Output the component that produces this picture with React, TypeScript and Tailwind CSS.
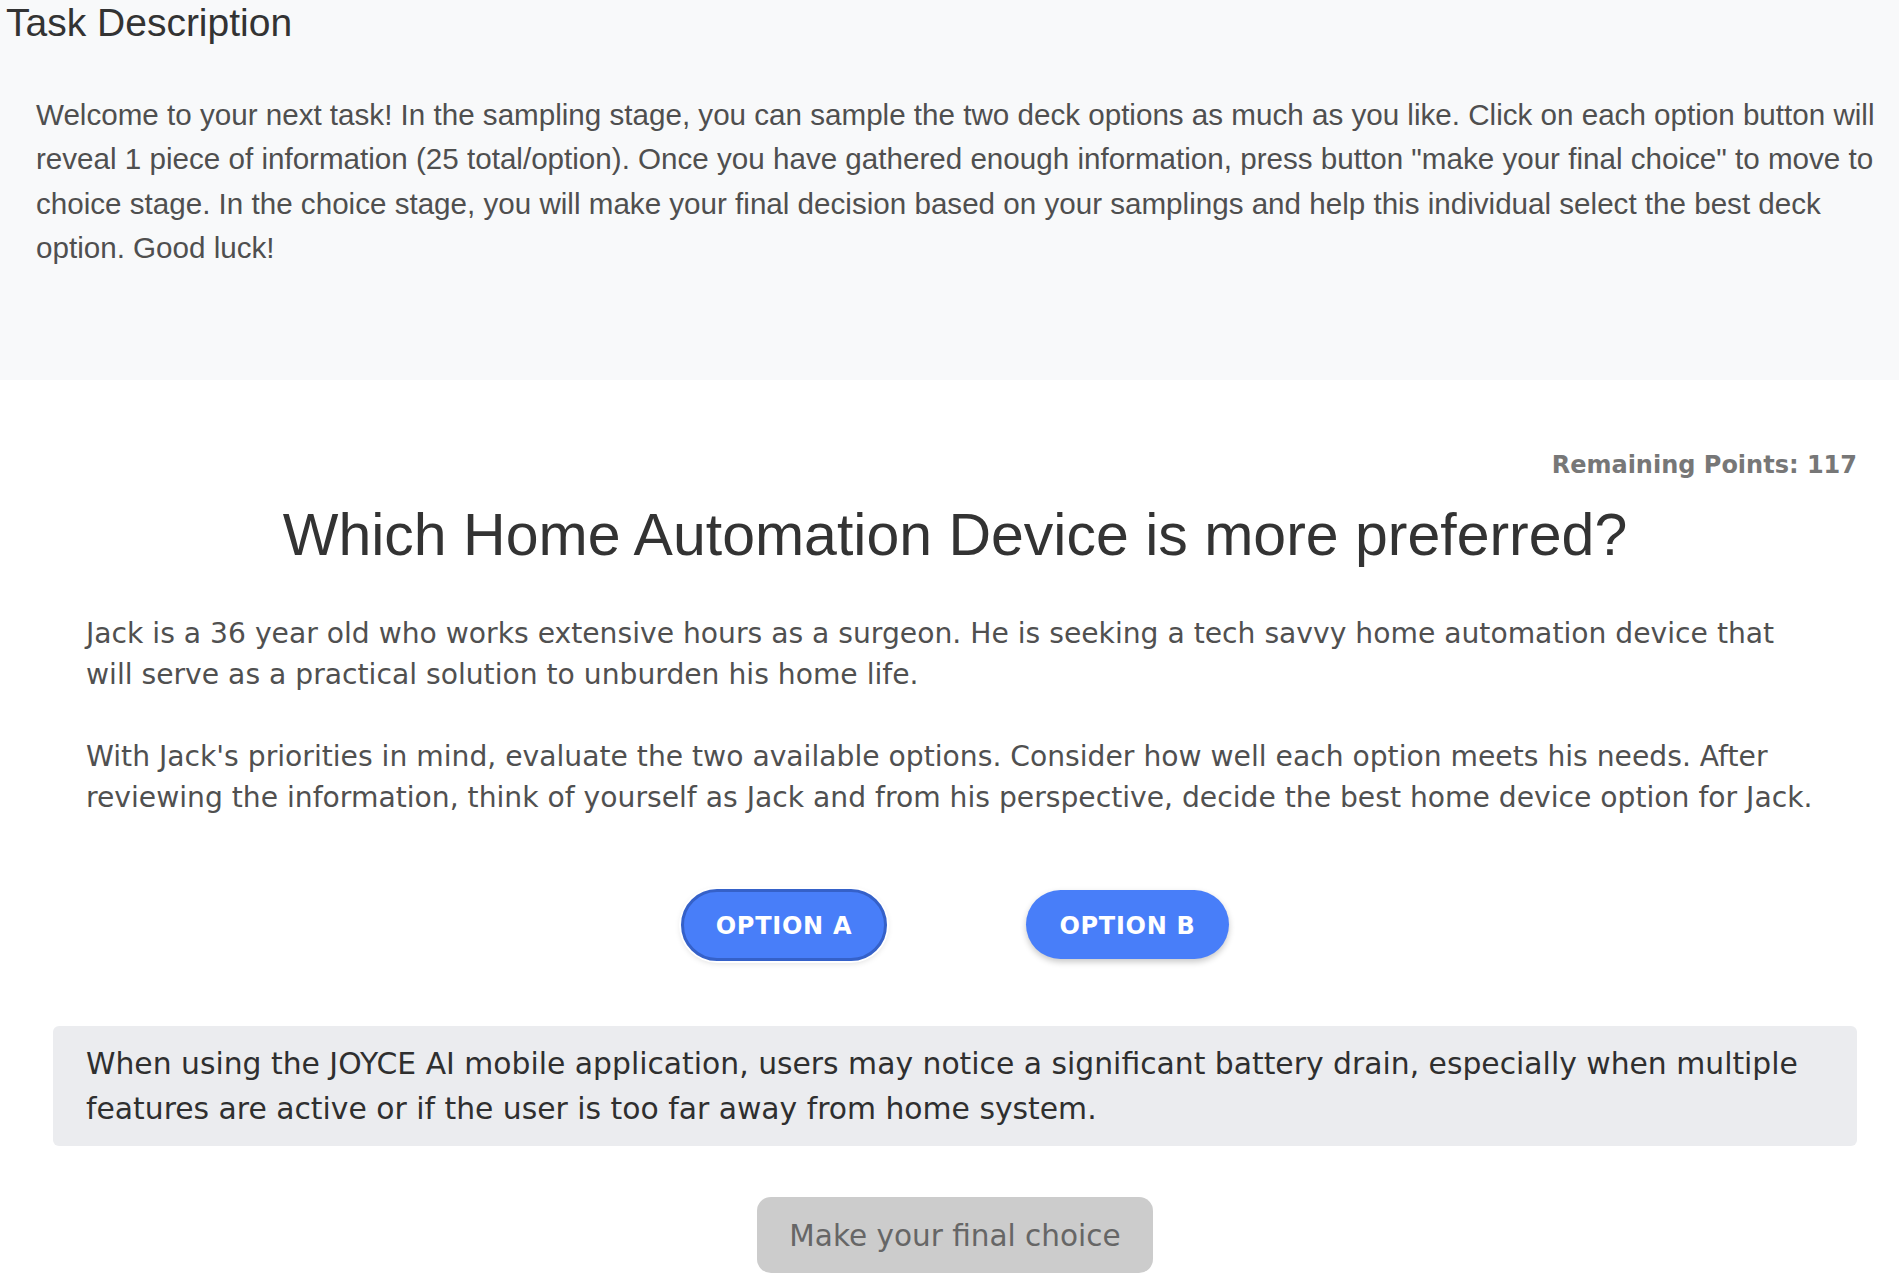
export default function App() {
  const sans = "font-['Liberation_Sans',Arial,sans-serif]";
  const verd = "font-['DejaVu_Sans',Verdana,sans-serif]";

  return (
    <div className="min-h-screen bg-white">
      {/* Task description */}
      <section className={`bg-[#f8f9fa] pb-[109px] ${sans}`}>
        <h2 className="px-[6px] text-[39px] leading-[46px] text-[#333]">Task Description</h2>
        <p className="mt-[47px] pl-[36px] pr-[10px] text-[29.6px] leading-[44.4px] text-[#4f4f4f]">
          Welcome to your next task! In the sampling stage, you can sample the two deck options as much as you like. Click on each option button will reveal 1 piece of information (25 total/option). Once you have gathered enough information, press button "make your final choice" to move to choice stage. In the choice stage, you will make your final decision based on your samplings and help this individual select the best deck option. Good luck!
        </p>
      </section>

      <main className={`ml-[53px] mr-[42px] pt-[67px] ${verd}`}>
        <div className="text-right text-[24px] leading-[36px] font-bold text-[#777]">Remaining Points: 117</div>

        <h1 className={`mt-[17px] text-center text-[59px] leading-[70px] text-[#333] ${sans}`}>
          Which Home Automation Device is more preferred?
        </h1>

        <div className="mt-[43px] pl-[33px] pr-[38px] text-[28.2px] leading-[41px] text-[#505050]">
          <p>
            Jack is a 36 year old who works extensive hours as a surgeon. He is seeking a tech savvy home automation device that will serve as a practical solution to unburden his home life.
          </p>
          <p className="mt-[41px]">
            With Jack's priorities in mind, evaluate the two available options. Consider how well each option meets his needs. After reviewing the information, think of yourself as Jack and from his perspective, decide the best home device option for Jack.
          </p>
        </div>

        {/* option buttons */}
        <div className="mt-[71px] flex items-center justify-center gap-[139px]">
          <button className="w-[206px] h-[72px] rounded-full border-[3px] border-[#3561c9] bg-[#487ef9] pt-[2px] text-[24px] font-bold tracking-[0.03em] text-white shadow-[0_0_0_2px_#fff,0_2px_6px_rgba(0,0,0,0.15)]">
            OPTION A
          </button>
          <button className="w-[203px] h-[69px] rounded-full bg-[#487ef9] pt-[2px] text-[24px] font-bold tracking-[0.03em] text-white shadow-[0_3px_6px_rgba(0,0,0,0.22)]">
            OPTION B
          </button>
        </div>

        {/* revealed info */}
        <div className="mt-[65px] rounded-[6px] bg-[#ebecef] px-[33px] py-[15px] text-[29.8px] leading-[45px] text-[#2f2f2f]">
          When using the JOYCE AI mobile application, users may notice a significant battery drain, especially when multiple features are active or if the user is too far away from home system.
        </div>

        <div className="mt-[51px] flex justify-center">
          <button className="w-[396px] h-[76px] rounded-[14px] bg-[#cccccc] pt-[3px] text-[29.5px] text-[#666]">
            Make your final choice
          </button>
        </div>
      </main>
    </div>
  );
}
